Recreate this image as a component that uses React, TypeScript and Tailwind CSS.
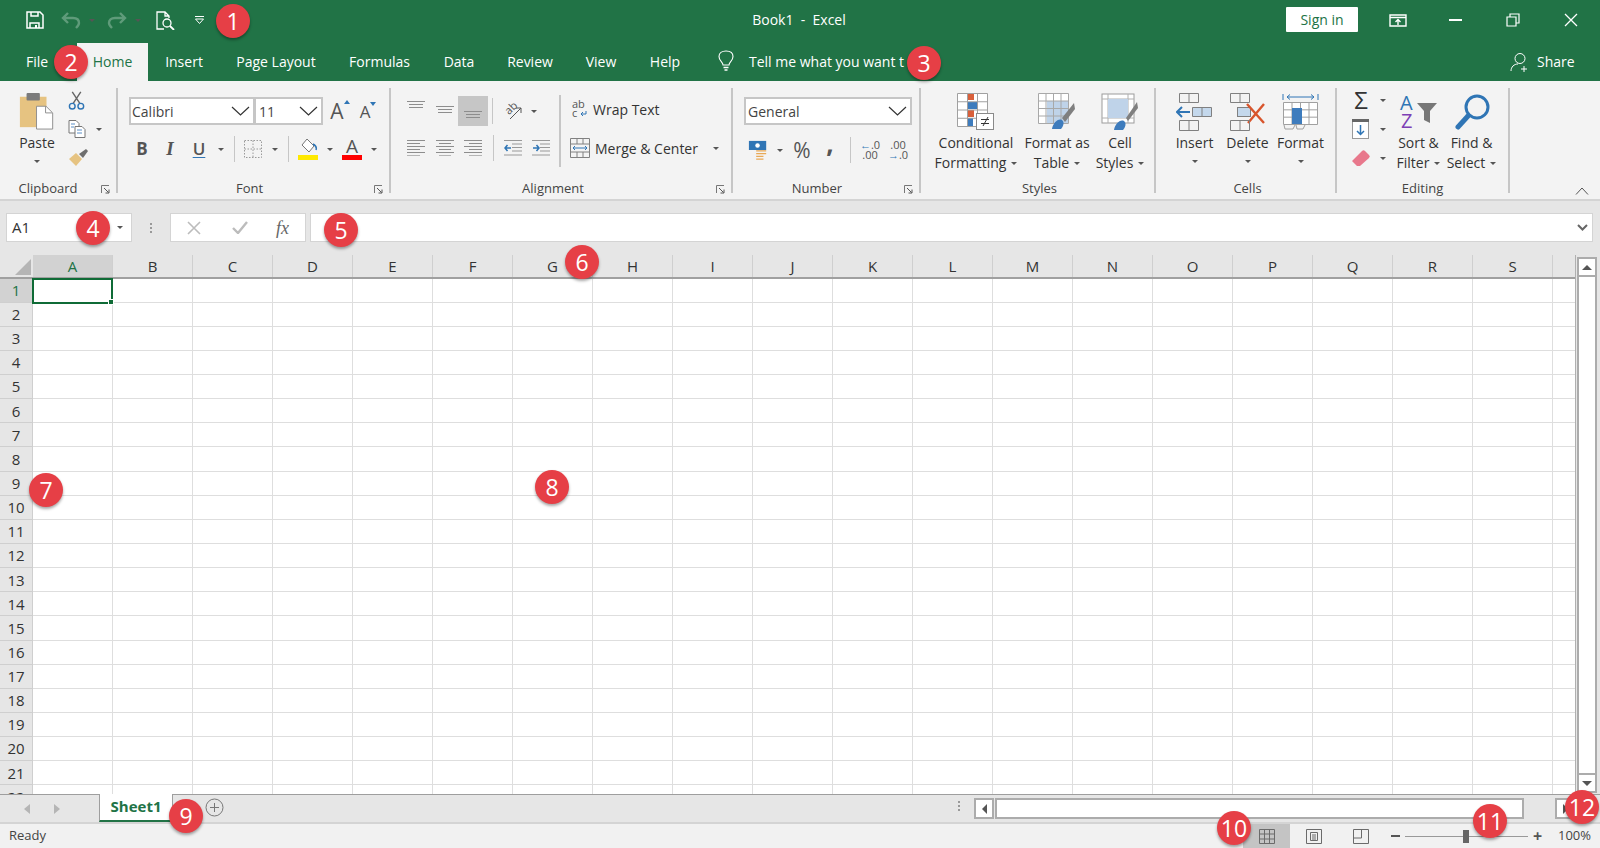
import type { ReactNode } from 'react';

const COLS = ['A', 'B', 'C', 'D', 'E', 'F', 'G', 'H', 'I', 'J', 'K', 'L', 'M', 'N', 'O', 'P', 'Q', 'R', 'S'];
const ROWS = Array.from({ length: 22 }, (_, i) => i + 1);
const TABS = [
  { label: 'Insert', w: 'w-[72px]' },
  { label: 'Page Layout', w: 'w-[112px]' },
  { label: 'Formulas', w: 'w-[95px]' },
  { label: 'Data', w: 'w-[64px]' },
  { label: 'Review', w: 'w-[78px]' },
  { label: 'View', w: 'w-[64px]' },
  { label: 'Help', w: 'w-[64px]' },
];

function Badge({ n, className }: { n: number; className: string }) {
  return (
    <div
      className={`absolute z-20 flex h-[34px] w-[34px] items-center justify-center rounded-full bg-[#e63f46] text-[23px] leading-none text-white shadow-[0_2px_3px_rgba(0,0,0,0.35)] ${className}`}
    >
      {n}
    </div>
  );
}

function Caret({ className = '' }: { className?: string }) {
  return <span className={`inline-block h-0 w-0 border-x-[3px] border-t-[3px] border-x-transparent border-t-[#555] ${className}`} />;
}

function Launcher() {
  return (
    <svg width="9" height="9" viewBox="0 0 9 9" fill="none" stroke="#777" strokeWidth="1">
      <path d="M0.5 8V0.5H8" />
      <path d="M3 3l4.5 4.5M4.5 8H8V4.5" stroke="#555" />
    </svg>
  );
}

function Chevron() {
  return (
    <svg width="19" height="10" viewBox="0 0 19 10" fill="none" stroke="#333" strokeWidth="1.2">
      <path d="M1 1l8.5 8L18 1" />
    </svg>
  );
}

function Group({ w, label, labelClass = '', launcher, children }: { w: string; label: string; labelClass?: string; launcher?: boolean; children: ReactNode }) {
  return (
    <div className={`flex h-full shrink-0 flex-col ${w}`}>
      <div className="flex min-h-0 flex-1">
        <div className="min-w-0 flex-1">{children}</div>
        <div className="my-[7px] h-[105px] w-[2px] shrink-0 bg-[#c6c6c6]" />
      </div>
      <div className={`relative -mt-[24px] mr-[2px] flex h-[24px] items-center justify-center pt-[3px] text-[13px] text-[#444] ${labelClass}`}>
        {label}
        {launcher && (
          <span className="absolute right-[6px] top-[10px] flex">
            <Launcher />
          </span>
        )}
      </div>
    </div>
  );
}

function LargeButton({ w, icon, lines, carets }: { w: string; icon: ReactNode; lines: string[]; carets?: boolean }) {
  return (
    <div className={`flex shrink-0 flex-col items-center ${w}`}>
      <div className="flex h-[42px] items-center justify-center">{icon}</div>
      <div className="text-center text-[14px] leading-[20px] text-[#333]">
        {lines.map((l, i) => (
          <div key={l} className="flex items-center justify-center gap-[5px] whitespace-nowrap">
            {l}
            {carets && i === lines.length - 1 && <Caret />}
          </div>
        ))}
      </div>
    </div>
  );
}

function AlignIcon({ kind }: { kind: 'l' | 'c' | 'r' }) {
  const x1 = kind === 'c' ? 3 : kind === 'r' ? 5 : 0;
  const len = kind === 'c' ? 12 : 13;
  return (
    <svg width="18" height="18" viewBox="0 0 18 18" stroke="#8d8d8d" strokeWidth="1">
      <path d="M0 1.5h18" />
      <path d={`M${x1} 4.5h${len}`} />
      <path d="M0 7.5h18" />
      <path d={`M${x1} 10.5h${len}`} />
      <path d="M0 13.5h18" />
      <path d={`M${x1} 16.5h${len}`} stroke="#b5b5b5" />
    </svg>
  );
}

function VAlignIcon({ y }: { y: number }) {
  return (
    <svg width="18" height="24" viewBox="0 0 18 24" stroke="#8d8d8d" strokeWidth="1">
      <path d={`M0 ${y + 0.5}h18M2 ${y + 3.5}h14M2 ${y + 6.5}h14`} />
    </svg>
  );
}

function GridGlyph({ x, y, w, h, cols, rows, stroke = '#808080' }: { x: number; y: number; w: number; h: number; cols: number; rows: number; stroke?: string }) {
  const v = Array.from({ length: cols + 1 }, (_, i) => x + (w * i) / cols);
  const s = Array.from({ length: rows + 1 }, (_, i) => y + (h * i) / rows);
  return (
    <g stroke={stroke} strokeWidth="1" fill="none">
      {v.map((p) => (
        <path key={`v${p}`} d={`M${p} ${y}V${y + h}`} />
      ))}
      {s.map((p) => (
        <path key={`h${p}`} d={`M${x} ${p}H${x + w}`} />
      ))}
    </g>
  );
}

function CondIcon() {
  return (
    <svg width="38" height="38" viewBox="0 0 38 38">
      <rect x="1" y="1" width="30" height="33" fill="#fff" />
      <rect x="10" y="1" width="7" height="6" fill="#d9603b" />
      <rect x="10" y="9" width="10" height="7" fill="#3e7cbd" />
      <rect x="10" y="17" width="7" height="7" fill="#d9603b" />
      <rect x="10" y="25" width="6" height="8" fill="#3e7cbd" />
      <GridGlyph x={0.5} y={0.5} w={30} h={33} cols={3} rows={4} stroke="#a0a0a0" />
      <rect x="19.5" y="20.5" width="17" height="16" fill="#fff" stroke="#8a8a8a" />
      <path d="M24 26.500h8M24 30.500h8M31 24l-5 9" stroke="#333" fill="none" />
    </svg>
  );
}

function TableIcon() {
  return (
    <svg width="38" height="38" viewBox="0 0 38 38">
      <rect x="1" y="1" width="30" height="30" fill="#fff" />
      <rect x="9" y="8" width="22" height="22" fill="#bfd3e9" />
      <GridGlyph x={0.5} y={0.5} w={30} h={30} cols={4} rows={4} stroke="#a8a8a8" />
      <path d="M24 25L36 10l1 6-10 13z" fill="#7f7f7f" />
      <path d="M14 36c1-6 6-11 10-9 3 2 1 7-1 9z" fill="#3e7cbd" />
    </svg>
  );
}

function CellStyleIcon() {
  return (
    <svg width="38" height="38" viewBox="0 0 38 38">
      <rect x="1" y="1" width="32" height="29" fill="#fff" stroke="#9c9c9c" />
      <path d="M1 6h32M7 1v29M27 1v29M1 25h32" stroke="#b0b0b0" />
      <rect x="7" y="6" width="20" height="19" fill="#bfd3e9" />
      <path d="M25 25L36 9l1 6-10 13z" fill="#7f7f7f" />
      <path d="M13 37c1-6 6-11 10-9 3 2 1 7-1 9z" fill="#3e7cbd" />
    </svg>
  );
}

function InsertCellsIcon() {
  return (
    <svg width="38" height="38" viewBox="0 0 38 38">
      <GridGlyph x={3.5} y={0.5} w={19} h={9} cols={2} rows={1} />
      <rect x="16.5" y="14.5" width="19" height="9" fill="#c4d8ec" />
      <GridGlyph x={16.5} y={14.5} w={19} h={9} cols={2} rows={1} />
      <path d="M14 19H2M6 14l-5 5 5 5" stroke="#2f75b5" strokeWidth="2" fill="none" />
      <GridGlyph x={3.5} y={27.5} w={19} h={10} cols={2} rows={1} />
    </svg>
  );
}

function DeleteCellsIcon() {
  return (
    <svg width="38" height="38" viewBox="0 0 38 38">
      <GridGlyph x={1.5} y={0.5} w={19} h={9} cols={2} rows={1} />
      <rect x="8.5" y="14.5" width="13" height="9" fill="#c4d8ec" stroke="#808080" />
      <path d="M18 11l17 19M35 11L19 30" stroke="#d8552c" strokeWidth="2.4" />
      <GridGlyph x={1.5} y={27.5} w={19} h={10} cols={2} rows={1} />
    </svg>
  );
}

function FormatCellsIcon() {
  return (
    <svg width="38" height="38" viewBox="0 0 38 38">
      <path d="M1 1v6M36 1v6M5 4h27M8 1.500L5 4l3 2.500M29 1.500L32 4l-3 2.500" stroke="#2f75b5" fill="none" />
      <rect x="1.5" y="9.5" width="34" height="22" fill="#fff" />
      <GridGlyph x={1.5} y={9.5} w={34} h={22} cols={4} rows={3} stroke="#a0a0a0" />
      <rect x="10" y="15" width="10" height="16" fill="#3e7cbd" />
      <path d="M2 32l1 4h8l2-4M14 32l1 4h6l2-4" stroke="#a0a0a0" fill="none" />
    </svg>
  );
}

export default function App() {
  return (
    <div className="relative h-[848px] w-[1600px] overflow-hidden bg-white font-['Open_Sans',sans-serif] text-[#333]">
      {/* Title bar + tabs */}
      <div className="h-[81px] bg-[#217346] text-white">
        <div className="flex h-[40px] items-center">
          <div className="flex w-[26px] shrink-0" />
          <svg width="18" height="18" viewBox="0 0 18 18" fill="none" stroke="#fff" strokeWidth="1.5">
            <path d="M1 1h13l3 3v13H1zM5 1v4h7V1M4 17v-5h9v5" />
            <path d="M9 14h2v3H9z" fill="#fff" stroke="none" />
          </svg>
          <svg className="ml-[17px]" width="20" height="17" viewBox="0 0 20 17" fill="none" stroke="#5f9b7a" strokeWidth="2.4">
            <path d="M7 1L2 6l5 5M2 6h10c4 0 6 2 6 5 0 2-1 3-3 5" />
          </svg>
          <Caret className="ml-[8px] border-t-[#5f9b7a]" />
          <svg className="ml-[12px]" width="20" height="17" viewBox="0 0 20 17" fill="none" stroke="#5f9b7a" strokeWidth="2.4">
            <path d="M13 1l5 5-5 5M18 6H8c-4 0-6 2-6 5 0 2 1 3 3 5" />
          </svg>
          <Caret className="ml-[8px] border-t-[#5f9b7a]" />
          <svg className="ml-[15px]" width="19" height="19" viewBox="0 0 19 19" fill="none" stroke="#fff" strokeWidth="1.3">
            <path d="M8 18H1V1h8l4 4v2M9 1v4h4" />
            <circle cx="11" cy="12" r="4" />
            <path d="M14 15l4 4" strokeWidth="1.8" />
          </svg>
          <svg className="ml-[19px]" width="11" height="8" viewBox="0 0 11 8" fill="none" stroke="#fff">
            <path d="M1 .5h9M1.500 3h8L5.500 7.500z" />
          </svg>
          <div className="ml-[546px] flex w-[96px] shrink-0 justify-center whitespace-pre pb-[2px] text-[14px]">Book1  -  Excel</div>
          <div className="mb-[1px] ml-[439px] flex h-[25px] w-[72px] shrink-0 items-center justify-center rounded-[1px] bg-white text-[14px] text-[#217346]">Sign in</div>
          <svg className="ml-[31px]" width="18" height="13" viewBox="0 0 18 13" fill="none" stroke="#fff" strokeWidth="1.4">
            <path d="M1 1h16v11H1zM1 3.500h16" />
            <path d="M9 11V6M6.500 8L9 5.500 11.500 8" />
          </svg>
          <div className="ml-[42px] h-[1.5px] w-[13px] bg-white" />
          <svg className="ml-[44px]" width="14" height="14" viewBox="0 0 14 14" fill="none" stroke="#fff" strokeWidth="1.2">
            <path d="M1 4h9v9H1zM4 4V1h9v9h-3" />
          </svg>
          <svg className="ml-[44px]" width="14" height="14" viewBox="0 0 14 14" fill="none" stroke="#fff" strokeWidth="1.3">
            <path d="M1 1l12 12M13 1L1 13" />
          </svg>
        </div>
        <div className="flex h-[41px] items-end text-[14px]">
          <div className="flex h-[38px] w-[77px] shrink-0 items-center pb-[2px] pl-[26px]">File</div>
          <div className="flex h-[38px] w-[71px] shrink-0 items-center justify-center bg-[#f3f3f3] pb-[1px] text-[#217346]">Home</div>
          {TABS.map((t) => (
            <div key={t.label} className={`flex h-[38px] shrink-0 items-center justify-center pb-[1px] ${t.w}`}>
              {t.label}
            </div>
          ))}
          <svg className="mb-[9px] ml-[21px] shrink-0" width="16" height="22" viewBox="0 0 16 22" fill="none" stroke="#fff" strokeWidth="1.1">
            <path d="M5 15c0-3-4-4-4-8.500C1 3 4 1 8 1s7 2 7 5.500C15 11 11 12 11 15z" />
            <path d="M5.500 17.500h5M6.500 20h3" strokeWidth="1.5" />
          </svg>
          <div className="flex h-[38px] shrink-0 items-center whitespace-nowrap pb-[1px] pl-[15px]">Tell me what you want t</div>
          <div className="flex-1" />
          <svg className="mb-[9px] shrink-0" width="20" height="20" viewBox="0 0 20 20" fill="none" stroke="#fff" strokeWidth="1">
            <circle cx="10" cy="6.500" r="5" />
            <path d="M1 19c0-4 3-7 7-7M14 14v6M11 17h6" />
          </svg>
          <div className="flex h-[38px] w-[70px] shrink-0 items-center pb-[1px] pl-[7px]">Share</div>
        </div>
      </div>

      {/* Ribbon */}
      <div className="flex h-[120px] border-b-[2px] border-[#d4d4d4] bg-[#f3f3f3]">
        <Group w="w-[118px]" label="Clipboard" labelClass="pr-[20px]" launcher>
          <div className="flex pt-[10px]">
            <div className="flex w-[66px] shrink-0 flex-col items-center pl-[8px]">
              <svg className="mt-[1px]" width="36" height="38" viewBox="0 0 36 40">
                <rect x="0" y="5" width="28" height="32" fill="#e6c381" />
                <rect x="7" y="1" width="14" height="8" rx="1" fill="#7b7b7b" />
                <path d="M17.500 15h10l7 7v17h-17z" fill="#fff" stroke="#8d8d8d" />
                <path d="M27 15v7h7" fill="none" stroke="#8d8d8d" />
              </svg>
              <div className="mt-[3px] text-[14px] leading-[20px]">Paste</div>
              <Caret className="mt-[7px]" />
            </div>
            <div className="flex flex-col items-start gap-[10px] pl-[2px]">
              <svg width="18" height="19" viewBox="0 0 18 20" fill="none">
                <path d="M4 1l8 12M13 1L5 13" stroke="#666" strokeWidth="1.5" />
                <circle cx="4" cy="16" r="3" stroke="#2f75b5" strokeWidth="1.5" />
                <circle cx="13" cy="16" r="3" stroke="#2f75b5" strokeWidth="1.5" />
              </svg>
              <div className="flex items-center gap-[10px]">
                <svg width="18" height="18" viewBox="0 0 18 18" fill="#fff" stroke="#777">
                  <path d="M1 .5h7l3 3V13H1z" />
                  <path d="M7 6.500h7l3 3v8H7z" />
                  <path d="M3 4h4M3 7h3M9 10h5M9 13h5" stroke="#5b8fc7" />
                </svg>
                <Caret />
              </div>
              <svg width="20" height="18" viewBox="0 0 20 18">
                <path d="M1 11l7-6 6 6-6 7z" fill="#e6c381" />
                <path d="M11 6l7-5 2 2-5 7z" fill="#6e6e6e" />
              </svg>
            </div>
          </div>
        </Group>
        <Group w="w-[273px]" label="Font" labelClass="pr-[8px]" launcher>
          <div className="flex items-center pl-[11px] pt-[16px]">
            <div className="flex h-[28px] w-[126px] shrink-0 items-center justify-between border-2 border-[#c6c6c6] bg-white pl-[1px] pr-[3px] text-[14px] text-[#444]">
              Calibri
              <Chevron />
            </div>
            <div className="-ml-[1px] flex h-[28px] w-[69px] shrink-0 items-center justify-between border-2 border-[#c6c6c6] bg-white pl-[3px] pr-[3px] text-[14px] text-[#444]">
              11
              <Chevron />
            </div>
            <div className="ml-[3px] flex w-[28px] justify-center text-[21px] leading-none text-[#555]">
              A<span className="-mt-[1px] h-0 w-0 border-x-[3px] border-b-[4px] border-x-transparent border-b-[#2f75b5]" />
            </div>
            <div className="flex w-[28px] justify-center text-[17px] leading-none text-[#555]">
              A<span className="-mt-[1px] h-0 w-0 border-x-[3px] border-t-[4px] border-x-transparent border-t-[#2f75b5]" />
            </div>
          </div>
          <div className="mt-[12px] flex h-[24px] items-center pl-[10px] text-[#555]">
            <span className="w-[28px] text-center text-[17px] font-bold">B</span>
            <span className="w-[28px] text-center font-['Liberation_Serif',serif] text-[19px] font-bold italic">I</span>
            <span className="ml-[1px] w-[28px] text-center text-[17px] font-semibold underline decoration-[#2f75b5] underline-offset-2">U</span>
            <Caret className="ml-[5px]" />
            <div className="ml-[10px] h-[26px] w-px bg-[#c6c6c6]" />
            <svg className="ml-[9px]" width="18" height="18" viewBox="0 0 18 18" fill="none" stroke="#9a9a9a" strokeDasharray="1.5 1.5">
              <path d="M.5.500h17v17H.5zM9 .5v17M.5 9h17" />
            </svg>
            <Caret className="ml-[10px]" />
            <div className="ml-[10px] h-[26px] w-px bg-[#c6c6c6]" />
            <svg className="ml-[9px]" width="20" height="22" viewBox="0 0 20 22">
              <path d="M9 1l7 7-5 6-7-7z" fill="#fff" stroke="#777" />
              <path d="M15 6c2 1 4 3 3 6" fill="none" stroke="#2f75b5" strokeWidth="1.5" />
              <rect x="0" y="17" width="20" height="5" fill="#ffe900" />
            </svg>
            <Caret className="ml-[9px]" />
            <div className="ml-[9px] flex w-[20px] flex-col items-center">
              <span className="text-[19px] leading-[17px] text-[#555]">A</span>
              <span className="h-[5px] w-[20px] bg-[#ff0000]" />
            </div>
            <Caret className="ml-[9px]" />
          </div>
        </Group>
        <Group w="w-[342px]" label="Alignment" labelClass="pr-[16px]" launcher>
          <div className="flex pl-[16px] pt-[15px]">
            <div className="flex w-[160px] shrink-0 flex-col">
              <div className="flex h-[30px] items-center">
                <div className="w-[29px]"><VAlignIcon y={2} /></div>
                <div className="w-[22px]"><VAlignIcon y={7} /></div>
                <div className="flex h-[30px] w-[30px] items-center justify-center bg-[#c6c6c6]"><VAlignIcon y={12} /></div>
                <div className="ml-[4px] h-[26px] w-px bg-[#c6c6c6]" />
                <div className="relative ml-[10px] h-[20px] w-[20px]">
                  <span className="absolute left-[1px] top-[0px] -rotate-45 text-[11px] leading-[13px] text-[#555]">ab</span>
                  <svg className="absolute inset-0" width="20" height="20" viewBox="0 0 20 20" fill="none" stroke="#555">
                    <path d="M7 18L18 7M13 7h5v5" />
                  </svg>
                </div>
                <Caret className="ml-[8px]" />
              </div>
              <div className="mt-[9px] flex h-[26px] items-center">
                <div className="w-[29px]"><AlignIcon kind="l" /></div>
                <div className="w-[28px]"><AlignIcon kind="c" /></div>
                <div className="w-[29px]"><AlignIcon kind="r" /></div>
                <div className="h-[26px] w-px bg-[#c6c6c6]" />
                <svg className="ml-[10px]" width="18" height="18" viewBox="0 0 18 18" fill="none">
                  <path d="M0 1.500h18M8 5h10M8 8.500h10M8 12h10M0 16h18" stroke="#999" />
                  <path d="M7 9H1M3.500 6L1 9l2.500 3" stroke="#2f75b5" strokeWidth="1.5" />
                </svg>
                <svg className="ml-[10px]" width="18" height="18" viewBox="0 0 18 18" fill="none">
                  <path d="M0 1.500h18M8 5h10M8 8.500h10M8 12h10M0 16h18" stroke="#999" />
                  <path d="M1 9h6M4.500 6L7 9l-2.500 3" stroke="#2f75b5" strokeWidth="1.5" />
                </svg>
              </div>
            </div>
            <div className="my-[-1px] ml-[-8px] h-[72px] w-[2px] shrink-0 bg-[#c6c6c6]" />
            <div className="flex flex-col pl-[9px] text-[14px]">
              <div className="flex h-[26px] items-center gap-[5px] pl-[2px]">
                <svg className="overflow-visible" width="16" height="20" viewBox="0 0 16 20" fontFamily="Open Sans, sans-serif" fontSize="11" fill="#555">
                  <text x="0" y="9">ab</text>
                  <text x="0" y="18">c</text>
                  <path d="M14 12v3H9M11 13l-2 2 2 2" fill="none" stroke="#2f75b5" />
                </svg>
                Wrap Text
              </div>
              <div className="mt-[13px] flex h-[26px] items-center">
                <svg width="20" height="20" viewBox="0 0 20 20" fill="none" stroke="#808080">
                  <path d="M.5.500h19v19H.5zM.5 6h19M.5 14h19M7 .5V6M13 .5V6M7 14v5.500M13 14v5.500" />
                  <path d="M3 10h14M5 8l-2 2 2 2M15 8l2 2-2 2" stroke="#2f75b5" />
                </svg>
                <span className="ml-[5px]">Merge &amp; Center</span>
                <Caret className="ml-[15px]" />
              </div>
            </div>
          </div>
        </Group>
        <Group w="w-[188px]" label="Number" labelClass="pr-[18px]" launcher>
          <div className="pl-[11px] pt-[16px]">
            <div className="flex h-[28px] w-[168px] items-center justify-between border-2 border-[#c6c6c6] bg-white pl-[2px] pr-[3px] text-[14px] text-[#444]">
              General
              <Chevron />
            </div>
            <div className="mt-[12px] flex h-[26px] items-center pl-[4px]">
              <svg width="20" height="20" viewBox="0 0 20 22">
                <rect x="0" y="1" width="19" height="10" fill="#2f75b5" />
                <circle cx="9.500" cy="6" r="2.500" fill="#fff" />
                <path d="M8 12h11M8 15h11M8 18h8M8 21h8" stroke="#e9a956" strokeWidth="1.5" />
              </svg>
              <Caret className="ml-[9px]" />
              <span className="ml-[6px] w-[26px] text-center text-[21px] leading-none text-[#555]">%</span>
              <span className="-mt-[14px] w-[30px] text-center text-[26px] font-bold leading-[20px] text-[#555]">,</span>
              <div className="ml-[5px] h-[26px] w-px bg-[#c6c6c6]" />
              <div className="ml-[4px] flex w-[30px] flex-col items-center text-[11px] leading-[10px] text-[#555]">
                <span><span className="font-bold text-[#2f75b5]">←</span>.0</span>
                <span>.00</span>
              </div>
              <div className="flex w-[26px] flex-col items-center text-[11px] leading-[10px] text-[#555]">
                <span>.00</span>
                <span><span className="font-bold text-[#2f75b5]">→</span>.0</span>
              </div>
            </div>
          </div>
        </Group>
        <Group w="w-[235px]" label="Styles" labelClass="pl-[4px]">
          <div className="flex pt-[10px]">
            <LargeButton w="w-[107px] pl-[3px]" icon={<CondIcon />} lines={['Conditional', 'Formatting']} carets />
            <LargeButton w="w-[58px]" icon={<TableIcon />} lines={['Format as', 'Table']} carets />
            <LargeButton w="w-[67px] pl-[1px]" icon={<CellStyleIcon />} lines={['Cell', 'Styles']} carets />
          </div>
        </Group>
        <Group w="w-[181px]" label="Cells" labelClass="pl-[4px]">
          <div className="flex pl-[12px] pt-[10px]">
            {[
              { l: 'Insert', i: <InsertCellsIcon /> },
              { l: 'Delete', i: <DeleteCellsIcon /> },
              { l: 'Format', i: <FormatCellsIcon /> },
            ].map((b) => (
              <div key={b.l} className="flex w-[53px] shrink-0 flex-col items-center">
                <div className="flex h-[42px] items-center">{b.i}</div>
                <div className="text-[14px] leading-[20px]">{b.l}</div>
                <Caret className="mt-[7px]" />
              </div>
            ))}
          </div>
        </Group>
        <Group w="w-[173px]" label="Editing">
          <div className="flex pl-[14px] pt-[7px]">
            <div className="flex w-[50px] shrink-0 flex-col gap-[7px] pt-[2px]">
              <div className="flex h-[20px] items-center gap-[9px]">
                <span className="w-[20px] text-center text-[24px] leading-none text-[#333]">Σ</span>
                <Caret />
              </div>
              <div className="flex h-[24px] items-center gap-[9px]">
                <svg width="20" height="22" viewBox="0 0 20 22">
                  <rect x="1.500" y="1.500" width="16" height="19" fill="#fff" stroke="#999" />
                  <rect x="1" y="1" width="17" height="3" fill="#666" />
                  <path d="M9.500 7v9M6 13l3.500 3.500L13 13" stroke="#2f75b5" strokeWidth="1.5" fill="none" />
                </svg>
                <Caret />
              </div>
              <div className="flex h-[20px] items-center gap-[9px]">
                <svg width="20" height="18" viewBox="0 0 20 18">
                  <path d="M1 12L11 2a2 2 0 0 1 3 0l4 4a2 2 0 0 1 0 3L9 17H6z" fill="#e8788c" />
                </svg>
                <Caret />
              </div>
            </div>
            <div className="-ml-[9px] flex w-[53px] shrink-0 flex-col items-center pt-[3px]">
              <div className="flex h-[42px] items-center">
                <svg className="overflow-visible" width="40" height="36" viewBox="0 0 40 36" fontFamily="Open Sans, sans-serif" fontSize="20">
                  <text x="1" y="16" fill="#2f75b5">A</text>
                  <text x="2" y="34" fill="#7d3fb5">Z</text>
                  <path d="M18 9h20l-7 8v12l-6-3v-9z" fill="#777" />
                </svg>
              </div>
              <div className="whitespace-nowrap text-center text-[14px] leading-[20px]">Sort &amp;</div>
              <div className="flex items-center gap-[5px] whitespace-nowrap text-[14px] leading-[20px]">Filter<Caret /></div>
            </div>
            <div className="flex w-[53px] shrink-0 flex-col items-center pt-[3px]">
              <div className="flex h-[42px] items-center pl-[3px]">
                <svg width="36" height="36" viewBox="0 0 36 36" fill="none" stroke="#2f75b5">
                  <circle cx="22" cy="13" r="11" strokeWidth="3" />
                  <path d="M13 22L3 33" strokeWidth="5" strokeLinecap="round" />
                </svg>
              </div>
              <div className="whitespace-nowrap text-[14px] leading-[20px]">Find &amp;</div>
              <div className="flex items-center gap-[5px] whitespace-nowrap text-[14px] leading-[20px]">Select<Caret /></div>
            </div>
          </div>
        </Group>
        <div className="flex flex-1 items-end justify-end pb-[4px] pr-[11px]">
          <svg width="14" height="8" viewBox="0 0 14 8" fill="none" stroke="#555">
            <path d="M1 7.500L7 1l6 6.500" />
          </svg>
        </div>
      </div>

      {/* Formula bar */}
      <div className="flex h-[54px] items-start bg-[#e6e6e6] pl-[6px] pr-[7px] pt-[12px]">
        <div className="flex h-[29px] w-[126px] shrink-0 items-center justify-between border border-[#d4d4d4] bg-white pl-[5px] pr-[8px] text-[15px]">
          A1
          <Caret />
        </div>
        <div className="flex h-[29px] w-[38px] shrink-0 flex-col items-center justify-center gap-[2px]">
          <span className="h-[2px] w-[2px] bg-[#999]" />
          <span className="h-[2px] w-[2px] bg-[#999]" />
          <span className="h-[2px] w-[2px] bg-[#999]" />
        </div>
        <div className="flex h-[29px] w-[136px] shrink-0 items-center border border-[#d4d4d4] bg-white">
          <svg className="ml-[16px]" width="14" height="14" viewBox="0 0 14 14" fill="none" stroke="#bcbcbc" strokeWidth="1.6">
            <path d="M1 1l12 12M13 1L1 13" />
          </svg>
          <svg className="ml-[31px]" width="16" height="13" viewBox="0 0 16 13" fill="none" stroke="#bcbcbc" strokeWidth="2.4">
            <path d="M1 7l5 5L15 1" />
          </svg>
          <span className="ml-[28px] font-['Liberation_Serif',serif] text-[18px] italic leading-none text-[#666]">fx</span>
        </div>
        <div className="ml-[4px] flex h-[29px] flex-1 items-center justify-end border border-[#d4d4d4] bg-white pr-[4px]">
          <svg width="11" height="7" viewBox="0 0 11 7" fill="none" stroke="#666" strokeWidth="2">
            <path d="M1 1l4.500 4.500L10 1" />
          </svg>
        </div>
      </div>

      {/* Grid */}
      <div className="flex h-[539px]">
        <div className="h-full min-w-0 flex-1 overflow-hidden">
          <div className="flex h-[23.5px] border-b-2 border-[#a0a0a0] bg-[#e6e6e6]">
            <div className="relative w-[33px] shrink-0">
              <div className="absolute bottom-[2px] right-[2px] h-0 w-0 border-b-[16px] border-l-[16px] border-b-[#b5b5b5] border-l-transparent" />
            </div>
            {COLS.map((c) => (
              <div
                key={c}
                className={`flex w-[80px] shrink-0 items-center justify-center border-r border-[#cfcfcf] text-[15px] ${c === 'A' ? 'bg-[#d2d2d2] text-[#217346]' : 'text-[#333]'}`}
              >
                {c}
              </div>
            ))}
            <div className="flex-1" />
          </div>
          {ROWS.map((r) => (
            <div key={r} className="flex h-[24.15px]">
              <div className={`flex w-[33px] shrink-0 items-center justify-center border-b border-r border-[#cfcfcf] text-[15px] ${r === 1 ? 'bg-[#d2d2d2] text-[#217346]' : 'bg-[#e6e6e6] text-[#333]'}`}>
                {r}
              </div>
              {COLS.map((c) => (
                <div key={c} className="relative w-[80px] shrink-0 border-b border-r border-[#dedede]">
                  {r === 1 && c === 'A' && (
                    <div className="absolute -left-px -top-[1px] z-10 h-[26px] w-[81px] border-2 border-[#0f6b36]">
                      <span className="absolute -bottom-[3px] -right-[3px] h-[6px] w-[6px] border border-white bg-[#0f6b36]" />
                    </div>
                  )}
                </div>
              ))}
              <div className="flex-1 border-b border-[#dedede]" />
            </div>
          ))}
        </div>
        {/* Vertical scrollbar */}
        <div className="flex h-full w-[25px] shrink-0 flex-col border-l border-[#b0b0b0] bg-[#e6e6e6] pb-[1px] pl-[1px] pr-[3px] pt-[2px]">
          <div className="flex h-[20px] items-center justify-center border-2 border-[#acacac] bg-white">
            <span className="h-0 w-0 border-x-[5px] border-b-[5px] border-x-transparent border-b-[#555]" />
          </div>
          <div className="flex-1 border-x-2 border-[#acacac] bg-white" />
          <div className="flex h-[20px] items-center justify-center border-2 border-[#acacac] bg-white">
            <span className="h-0 w-0 border-x-[5px] border-t-[5px] border-x-transparent border-t-[#555]" />
          </div>
        </div>
      </div>

      {/* Sheet tabs + horizontal scrollbar */}
      <div className="flex h-[28px] items-start border-t border-[#9e9e9e] bg-[#e6e6e6]">
        <div className="flex h-full w-[99px] shrink-0 items-center gap-[24px] pl-[24px]">
          <span className="h-0 w-0 border-y-[5px] border-r-[6px] border-y-transparent border-r-[#b5b5b5]" />
          <span className="h-0 w-0 border-y-[5px] border-l-[6px] border-y-transparent border-l-[#b5b5b5]" />
        </div>
        <div className="-mt-px flex h-[28px] w-[74px] shrink-0 items-center justify-center border-x border-[#9e9e9e] border-b-2 border-b-[#217346] bg-white pb-[2px] text-[15px] font-bold text-[#217346]">
          Sheet1
        </div>
        <svg className="ml-[32px] mt-[3px]" width="19" height="19" viewBox="0 0 19 19" fill="none" stroke="#777">
          <circle cx="9.500" cy="9.500" r="8.500" />
          <path d="M9.500 5v9M5 9.500h9" />
        </svg>
        <div className="flex-1" />
        <div className="mr-[14px] mt-[6px] flex flex-col gap-[2px]">
          <span className="h-[2px] w-[2px] bg-[#999]" />
          <span className="h-[2px] w-[2px] bg-[#999]" />
          <span className="h-[2px] w-[2px] bg-[#999]" />
        </div>
        <div className="mt-[3px] flex h-[21px] w-[601px] shrink-0 items-center">
          <div className="flex h-[21px] w-[20px] items-center justify-center border-2 border-[#acacac] bg-white">
            <span className="h-0 w-0 border-y-[5px] border-r-[5px] border-y-transparent border-r-[#555]" />
          </div>
          <div className="ml-[1px] h-[21px] flex-1 border-2 border-[#acacac] bg-white" />
          <div className="ml-[31px] flex h-[21px] w-[20px] items-center justify-center border-2 border-[#acacac] bg-white">
            <span className="h-0 w-0 border-y-[5px] border-l-[5px] border-y-transparent border-l-[#555]" />
          </div>
        </div>
        <div className="w-[25px] shrink-0" />
      </div>

      {/* Status bar */}
      <div className="flex h-[26px] items-center border-t-2 border-[#d4d4d4] bg-[#f1f1f1] text-[13px] text-[#444]">
        <div className="pl-[9px]">Ready</div>
        <div className="flex-1" />
        <div className="flex h-full w-[47px] shrink-0 items-center justify-center bg-[#c4c4c4]">
          <svg width="16" height="15" viewBox="0 0 16 15" fill="none" stroke="#6b6b6b">
            <path d="M.5.500h15v14H.5zM.5 5h15M.5 10h15M5.500.5v14M10.500.5v14" />
          </svg>
        </div>
        <div className="flex w-[47px] shrink-0 justify-center">
          <svg width="16" height="15" viewBox="0 0 16 15" fill="none" stroke="#6b6b6b">
            <path d="M.5.500h15v14H.5zM4.500 3.500h7v8h-7zM6 6h4M6 8h4M6 10h4" />
          </svg>
        </div>
        <div className="flex w-[47px] shrink-0 justify-center">
          <svg width="16" height="15" viewBox="0 0 16 15" fill="none" stroke="#6b6b6b">
            <path d="M.5.500h15v14H.5zM.5 9h8V.5" />
          </svg>
        </div>
        <div className="ml-[7px] h-[2px] w-[9px] shrink-0 bg-[#555]" />
        <div className="relative ml-[5px] h-[1px] w-[123px] shrink-0 bg-[#999]">
          <span className="absolute left-[58px] top-[-6px] h-[13px] w-[6px] bg-[#666]" />
        </div>
        <div className="ml-[5px] w-[10px] shrink-0 text-[16px] font-bold leading-none text-[#555]">+</div>
        <div className="ml-[15px] w-[42px] shrink-0 text-[13px]">100%</div>
      </div>

      <Badge n={1} className="left-[216px] top-[4px]" />
      <Badge n={2} className="left-[54px] top-[45px]" />
      <Badge n={3} className="left-[907px] top-[46px]" />
      <Badge n={4} className="left-[76px] top-[211px]" />
      <Badge n={5} className="left-[324px] top-[213px]" />
      <Badge n={6} className="left-[565px] top-[245px]" />
      <Badge n={7} className="left-[29px] top-[473px]" />
      <Badge n={8} className="left-[535px] top-[470px]" />
      <Badge n={9} className="left-[169px] top-[799px]" />
      <Badge n={10} className="left-[1217px] top-[811px]" />
      <Badge n={11} className="left-[1473px] top-[804px]" />
      <Badge n={12} className="left-[1565px] top-[790px]" />
    </div>
  );
}
